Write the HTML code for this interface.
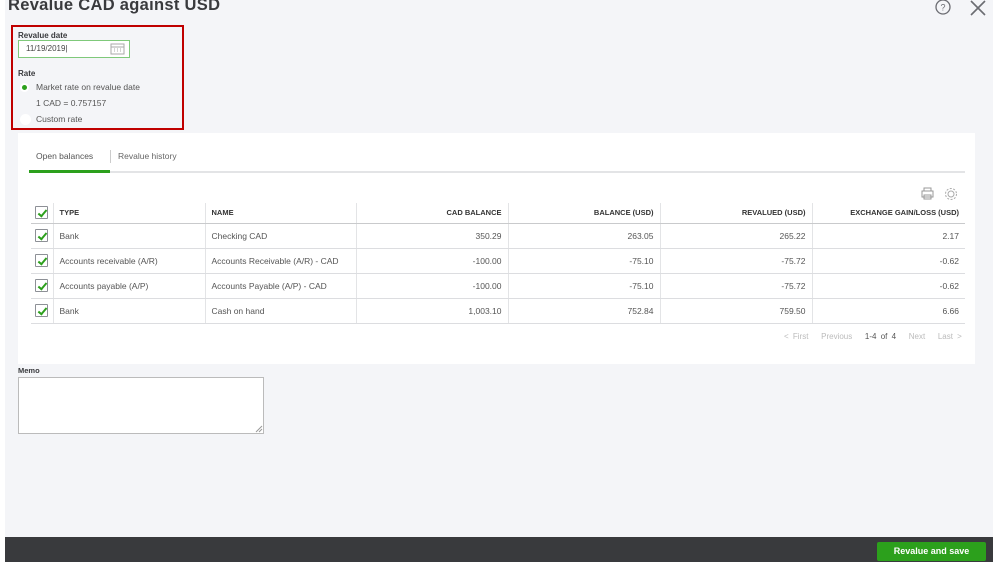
<!DOCTYPE html>
<html><head><style>
*{margin:0;padding:0;box-sizing:border-box}
body{width:999px;height:562px;background:#fff;font-family:"Liberation Sans",sans-serif;position:relative;overflow:hidden;color:#393a3d}
.bg{position:absolute;left:5px;top:0;width:988px;height:537px;background:#f4f5f8}
.a{position:absolute;white-space:nowrap}
.foot{position:absolute;left:5px;top:537px;width:988px;height:25px;background:#393a3d}
.btn{position:absolute;left:877px;top:542px;width:109px;height:19px;background:#2ca01c;border-radius:2px;color:#fff;font-weight:bold;font-size:9px;text-align:center;line-height:19px}
.panel{position:absolute;left:18px;top:133px;width:957px;height:231px;background:#fff}
table{position:absolute;left:31px;top:203px;width:934px;border-collapse:collapse;font-size:8.5px;color:#555}
td,th{height:25px;padding:0 6px;border-bottom:1px solid #dcdde0;border-left:1px solid #e3e4e6}
th{height:20px;font-weight:bold;color:#333;font-size:7.5px;text-align:left;border-bottom:1px solid #c9cacc}
tr>*:first-child{border-left:none;width:22px;padding:0 4px}
.r{text-align:right}
.cb{width:13px;height:13px;border:1px solid #8d9096;background:#fff;position:relative;border-radius:1px}
.cb:after{content:"";position:absolute;left:4px;top:1px;width:3px;height:7px;border:solid #2ca01c;border-width:0 2px 2px 0;transform:rotate(40deg)}
</style></head><body>
<div class="bg"></div>
<div class="a" style="left:8px;top:-4px;font-size:16.5px;font-weight:bold;color:#393a3d;letter-spacing:0.3px">Revalue CAD against USD</div>
<svg class="a" style="left:934px;top:0" width="20" height="17"><circle cx="9" cy="7" r="7" fill="none" stroke="#6b6c72" stroke-width="1.3"/><text x="9" y="10.5" font-size="9" text-anchor="middle" fill="#6b6c72" font-family="Liberation Sans">?</text></svg>
<svg class="a" style="left:969px;top:0" width="18" height="16"><path d="M2 1L16 15M16 1L2 15" stroke="#6b6c72" stroke-width="1.6"/></svg>
<div class="a" style="left:11px;top:25px;width:173px;height:105px;border:2px solid #c00000"></div>
<div class="a" style="left:18px;top:31px;font-size:8px;font-weight:bold">Revalue date</div>
<div class="a" style="left:18px;top:40px;width:112px;height:18px;border:1px solid #7fc97a;background:#fff;font-size:8px;line-height:16px;padding-left:7px;color:#444">11/19/2019|</div>
<svg class="a" style="left:110px;top:42px" width="15" height="13"><rect x="1" y="2" width="13" height="10" fill="none" stroke="#aaa"/><path d="M1 5H14M4 7h1M7 7h1M10 7h1M4 9h1M7 9h1M10 9h1" stroke="#aaa"/></svg>
<div class="a" style="left:18px;top:69px;font-size:8px;font-weight:bold">Rate</div>
<div class="a" style="left:20px;top:83px;width:9px;height:9px;border-radius:50%;background:#fff"></div>
<div class="a" style="left:22px;top:85px;width:5px;height:5px;border-radius:50%;background:#2ca01c"></div>
<div class="a" style="left:36px;top:82px;font-size:8.5px;color:#555">Market rate on revalue date</div>
<div class="a" style="left:36px;top:98px;font-size:8.5px;color:#555">1 CAD = 0.757157</div>
<div class="a" style="left:20px;top:114px;width:11px;height:11px;border-radius:50%;background:#fff"></div>
<div class="a" style="left:36px;top:114px;font-size:8.5px;color:#555">Custom rate</div>
<div class="panel"></div>
<div class="a" style="left:36px;top:151px;font-size:8.5px;color:#555">Open balances</div>
<div class="a" style="left:110px;top:150px;width:1px;height:13px;background:#ccc"></div>
<div class="a" style="left:118px;top:151px;font-size:8.5px;color:#666">Revalue history</div>
<div class="a" style="left:29px;top:171px;width:936px;height:2px;background:#e3e4e6"></div>
<div class="a" style="left:29px;top:170px;width:81px;height:3px;background:#2ca01c"></div>
<svg class="a" style="left:920px;top:187px" width="40" height="14"><path d="M4 4V1h7v3M2 4h11v6H2zM4 8h7v4H4z" fill="none" stroke="#999"/><circle cx="31" cy="7" r="3" fill="none" stroke="#aaa"/><circle cx="31" cy="7" r="5.5" fill="none" stroke="#aaa" stroke-dasharray="2 1.5"/></svg>
<table>
<tr><th><div class="cb"></div></th><th style="width:152px">TYPE</th><th style="width:151px">NAME</th><th class="r" style="width:152px">CAD BALANCE</th><th class="r" style="width:152px">BALANCE (USD)</th><th class="r" style="width:152px">REVALUED (USD)</th><th class="r">EXCHANGE GAIN/LOSS (USD)</th></tr>
<tr><td><div class="cb"></div></td><td>Bank</td><td>Checking CAD</td><td class="r">350.29</td><td class="r">263.05</td><td class="r">265.22</td><td class="r">2.17</td></tr>
<tr><td><div class="cb"></div></td><td>Accounts receivable (A/R)</td><td>Accounts Receivable (A/R) - CAD</td><td class="r">-100.00</td><td class="r">-75.10</td><td class="r">-75.72</td><td class="r">-0.62</td></tr>
<tr><td><div class="cb"></div></td><td>Accounts payable (A/P)</td><td>Accounts Payable (A/P) - CAD</td><td class="r">-100.00</td><td class="r">-75.10</td><td class="r">-75.72</td><td class="r">-0.62</td></tr>
<tr><td><div class="cb"></div></td><td>Bank</td><td>Cash on hand</td><td class="r">1,003.10</td><td class="r">752.84</td><td class="r">759.50</td><td class="r">6.66</td></tr>
</table>
<div class="a" style="left:784px;top:332px;font-size:8px;color:#bbb;word-spacing:2px">&lt; First &nbsp;&nbsp;Previous &nbsp;&nbsp;<span style="color:#555">1-4 of 4</span> &nbsp;&nbsp;Next &nbsp;&nbsp;Last &gt;</div>
<div class="a" style="left:18px;top:366px;font-size:7.5px;font-weight:bold">Memo</div>
<div class="a" style="left:18px;top:377px;width:246px;height:57px;border:1px solid #bbb;background:#fff"></div>
<svg class="a" style="left:255px;top:425px" width="8" height="8"><path d="M7 1L1 7M7 4L4 7" stroke="#999"/></svg>
<div class="foot"></div>
<div class="btn">Revalue and save</div>
</body></html>
